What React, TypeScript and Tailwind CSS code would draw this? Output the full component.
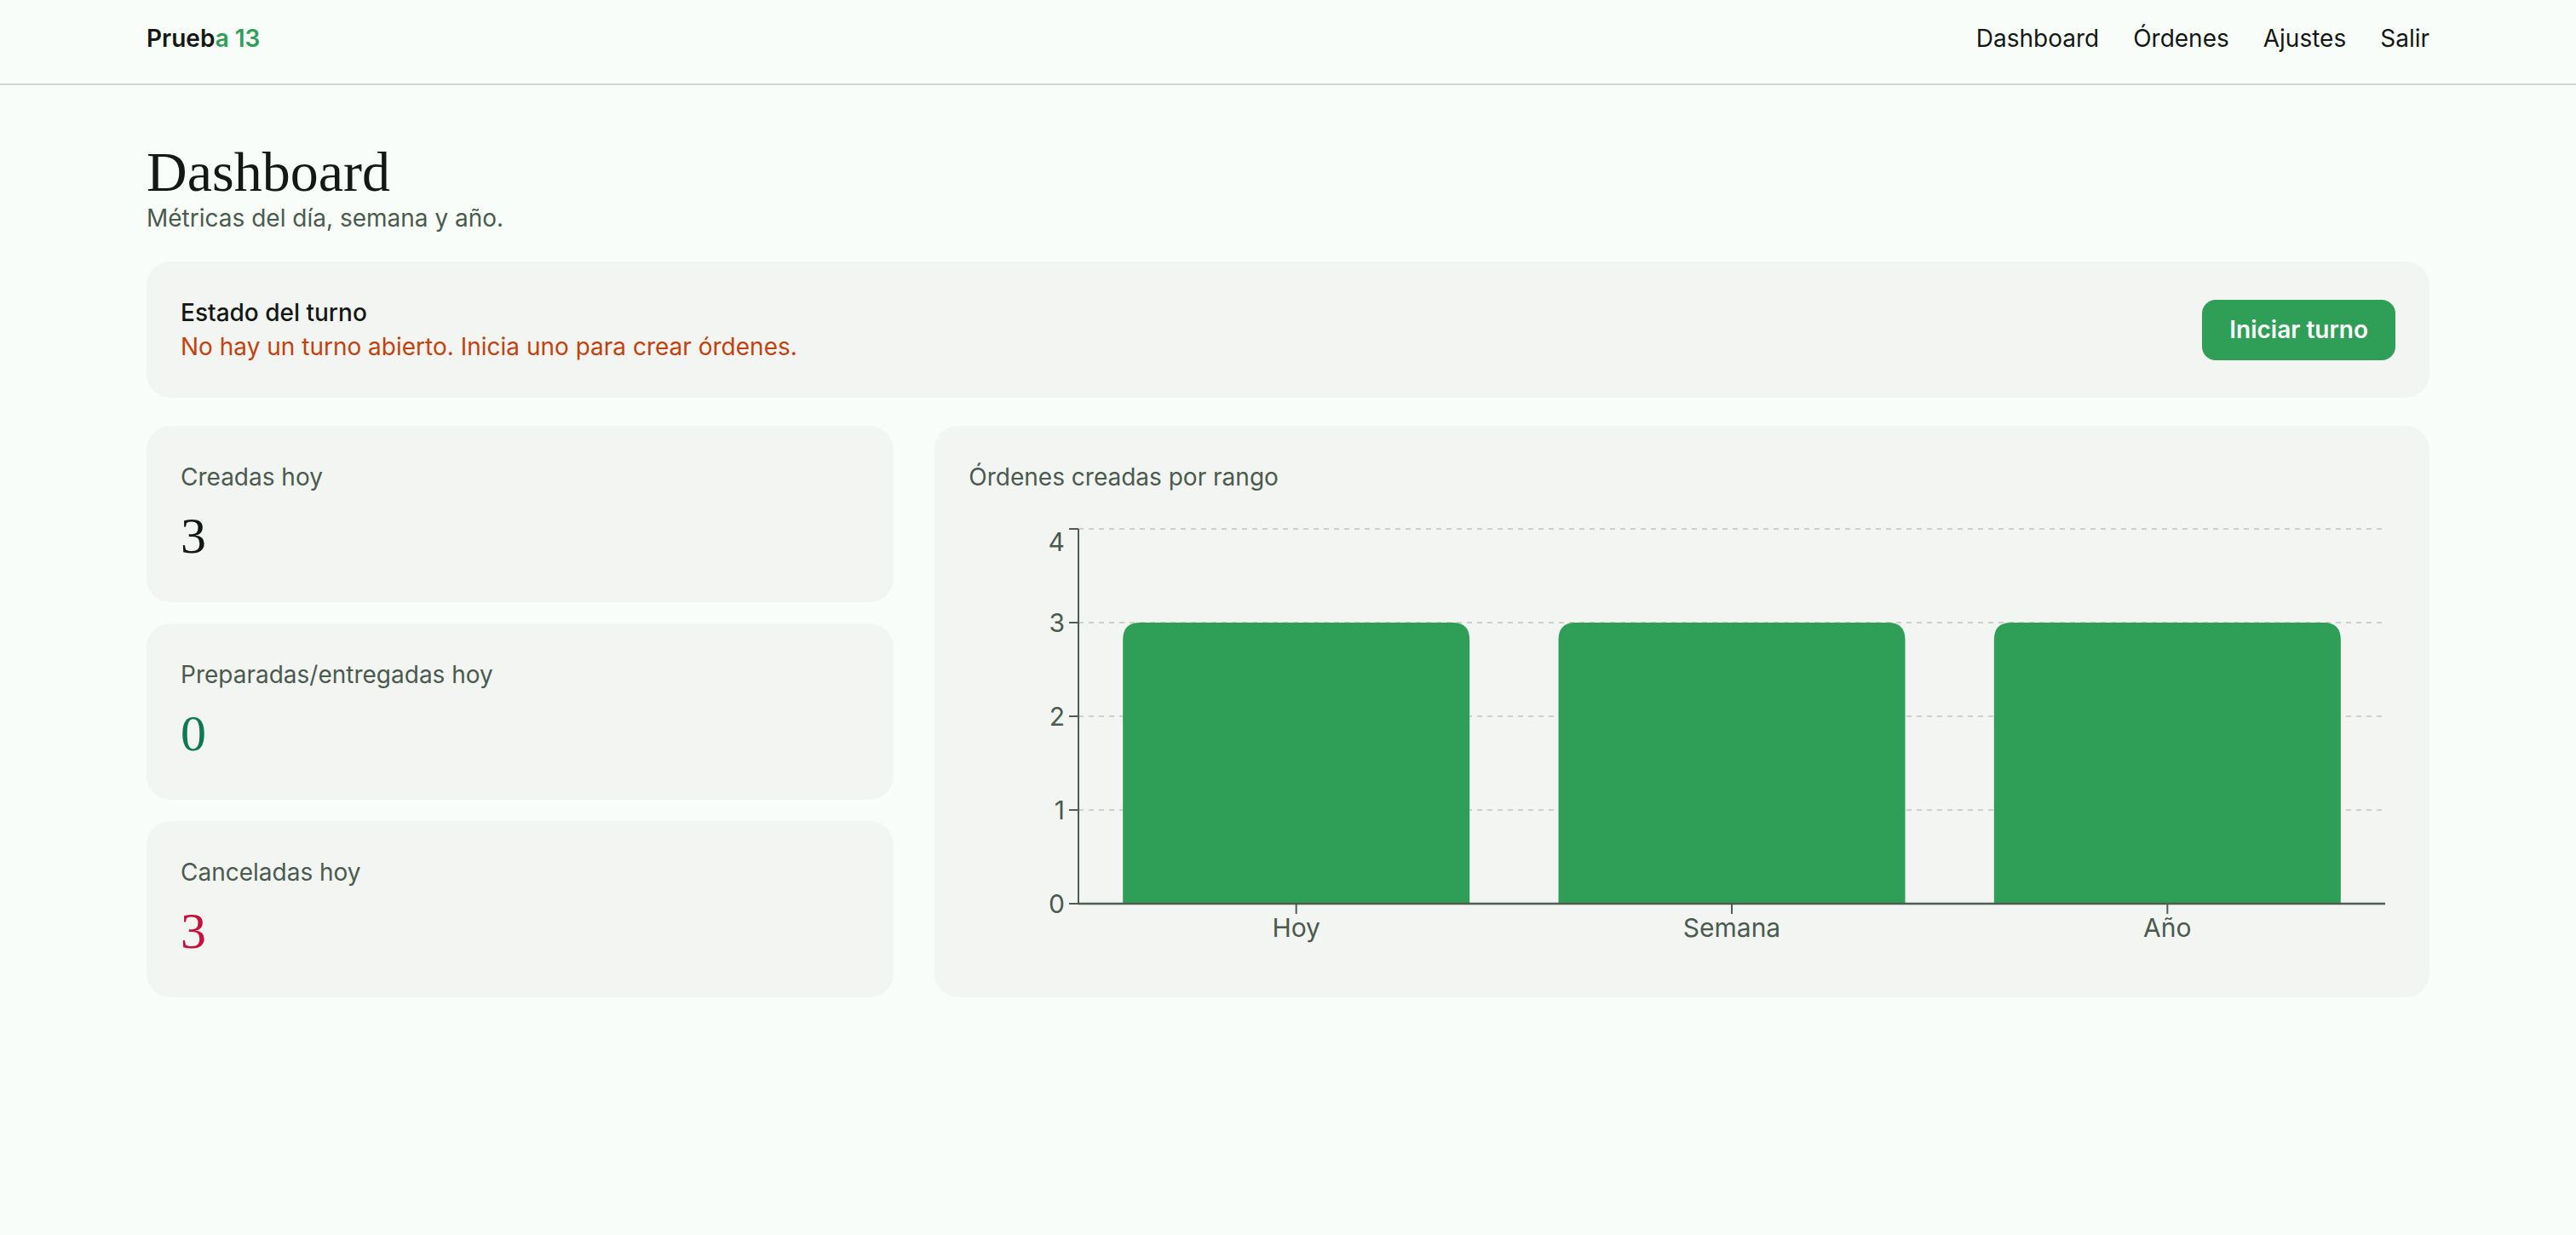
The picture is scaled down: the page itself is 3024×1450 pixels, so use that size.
import React from "react";

const sans = { fontFamily: "Inter, 'Noto Sans', 'Liberation Sans', sans-serif" };
const serif = { fontFamily: "'Liberation Serif', 'DejaVu Serif', serif" };

const navLinks = ["Dashboard", "Órdenes", "Ajustes", "Salir"];

const metrics = [
  { label: "Creadas hoy", value: 3, color: "text-[#141814]" },
  { label: "Preparadas/entregadas hoy", value: 0, color: "text-[#0b7a52]" },
  { label: "Canceladas hoy", value: 3, color: "text-[#c8103c]" },
];

const chartData = [
  { label: "Hoy", value: 3 },
  { label: "Semana", value: 3 },
  { label: "Año", value: 3 },
];

function BarChart() {
  // plot area inside the svg
  const width = 1674;
  const height = 551;
  const left = 129;
  const right = 1663;
  const top = 41;
  const bottom = 481;
  const max = 4;
  const unit = (bottom - top) / max;
  const band = (right - left) / chartData.length;
  const barW = 407;
  const r = 20;
  const axis = "#4d5e50";

  return (
    <svg width={width} height={height} viewBox={`0 0 ${width} ${height}`} className="block">
      {[4, 3, 2, 1].map((v) => (
        <line
          key={v}
          x1={left}
          x2={right}
          y1={bottom - v * unit}
          y2={bottom - v * unit}
          stroke="#cdd1cd"
          strokeWidth={2}
          strokeDasharray="6 6"
        />
      ))}

      {chartData.map((d, i) => {
        const x = left + i * band + (band - barW) / 2;
        const y = bottom - d.value * unit;
        const path = `M${x},${bottom} L${x},${y + r} Q${x},${y} ${x + r},${y} L${x + barW - r},${y} Q${x + barW},${y} ${x + barW},${y + r} L${x + barW},${bottom} Z`;
        return <path key={d.label} d={path} fill="#2f9e57" />;
      })}

      {/* y axis */}
      <line x1={left} x2={left} y1={top} y2={bottom} stroke={axis} strokeWidth={2} />
      {[0, 1, 2, 3, 4].map((v) => {
        const y = bottom - v * unit;
        const ly = v === 4 ? y + 15 : y;
        return (
          <g key={v}>
            <line x1={left - 11} x2={left} y1={y} y2={y} stroke={axis} strokeWidth={2} />
            <text
              x={left - 16}
              y={ly + 11}
              textAnchor="end"
              fill="#4b5a4e"
              fontSize={30}
              style={sans}
            >
              {v}
            </text>
          </g>
        );
      })}

      {/* x axis */}
      <line x1={left} x2={right} y1={bottom} y2={bottom} stroke={axis} strokeWidth={2.5} />
      {chartData.map((d, i) => {
        const cx = left + i * band + band / 2;
        return (
          <g key={d.label}>
            <line x1={cx} x2={cx} y1={bottom} y2={bottom + 12} stroke={axis} strokeWidth={2} />
            <text x={cx} y={520} textAnchor="middle" fill="#4b5a4e" fontSize={30} style={sans}>
              {d.label}
            </text>
          </g>
        );
      })}
    </svg>
  );
}

export default function App() {
  return (
    <div className="min-h-[1450px] bg-[#f9fdf9] text-[#141814]" style={sans}>
      {/* Top bar */}
      <header className="border-b-2 border-[#d0d5d0]">
        <div className="flex h-[98px] items-center justify-between px-[172px] pb-2">
          <div className="text-[28px] font-semibold leading-10">
            Prueb<span className="text-[#2f9e57]">a 13</span>
          </div>
          <nav className="flex items-center gap-[40px] text-[28px] leading-10">
            {navLinks.map((link) => (
              <a key={link} href="#" className="text-[#141814]">
                {link}
              </a>
            ))}
          </nav>
        </div>
      </header>

      <main className="px-[172px] pt-[68px]">
        <h1 className="text-[66px] leading-[68px] font-normal" style={serif}>
          Dashboard
        </h1>
        <p className="text-[28px] leading-10 text-[#4b5a4e]">Métricas del día, semana y año.</p>

        {/* Shift status */}
        <section className="mt-[31px] flex items-center justify-between rounded-[28px] bg-[#f3f5f2] p-10">
          <div>
            <div className="text-[28px] font-medium leading-10">Estado del turno</div>
            <div className="text-[28px] leading-10 text-[#c2410c]">
              No hay un turno abierto. Inicia uno para crear órdenes.
            </div>
          </div>
          <button className="h-[71px] rounded-[16px] bg-[#2f9e57] px-8 text-[28px] font-semibold text-white">
            Iniciar turno
          </button>
        </section>

        <div className="mt-[33px] grid grid-cols-[1fr_2fr] gap-12">
          <div className="flex flex-col gap-[25px]">
            {metrics.map((m) => (
              <div key={m.label} className="flex-1 rounded-[28px] bg-[#f3f5f2] p-10">
                <div className="text-[28px] leading-10 text-[#4b5a4e]">{m.label}</div>
                <div className={`mt-[13px] text-[60px] leading-[72px] ${m.color}`} style={serif}>
                  {m.value}
                </div>
              </div>
            ))}
          </div>

          <div className="rounded-[28px] bg-[#f3f5f2] p-10">
            <div className="text-[28px] leading-10 text-[#4b5a4e]">Órdenes creadas por rango</div>
            <BarChart />
          </div>
        </div>
      </main>
    </div>
  );
}
